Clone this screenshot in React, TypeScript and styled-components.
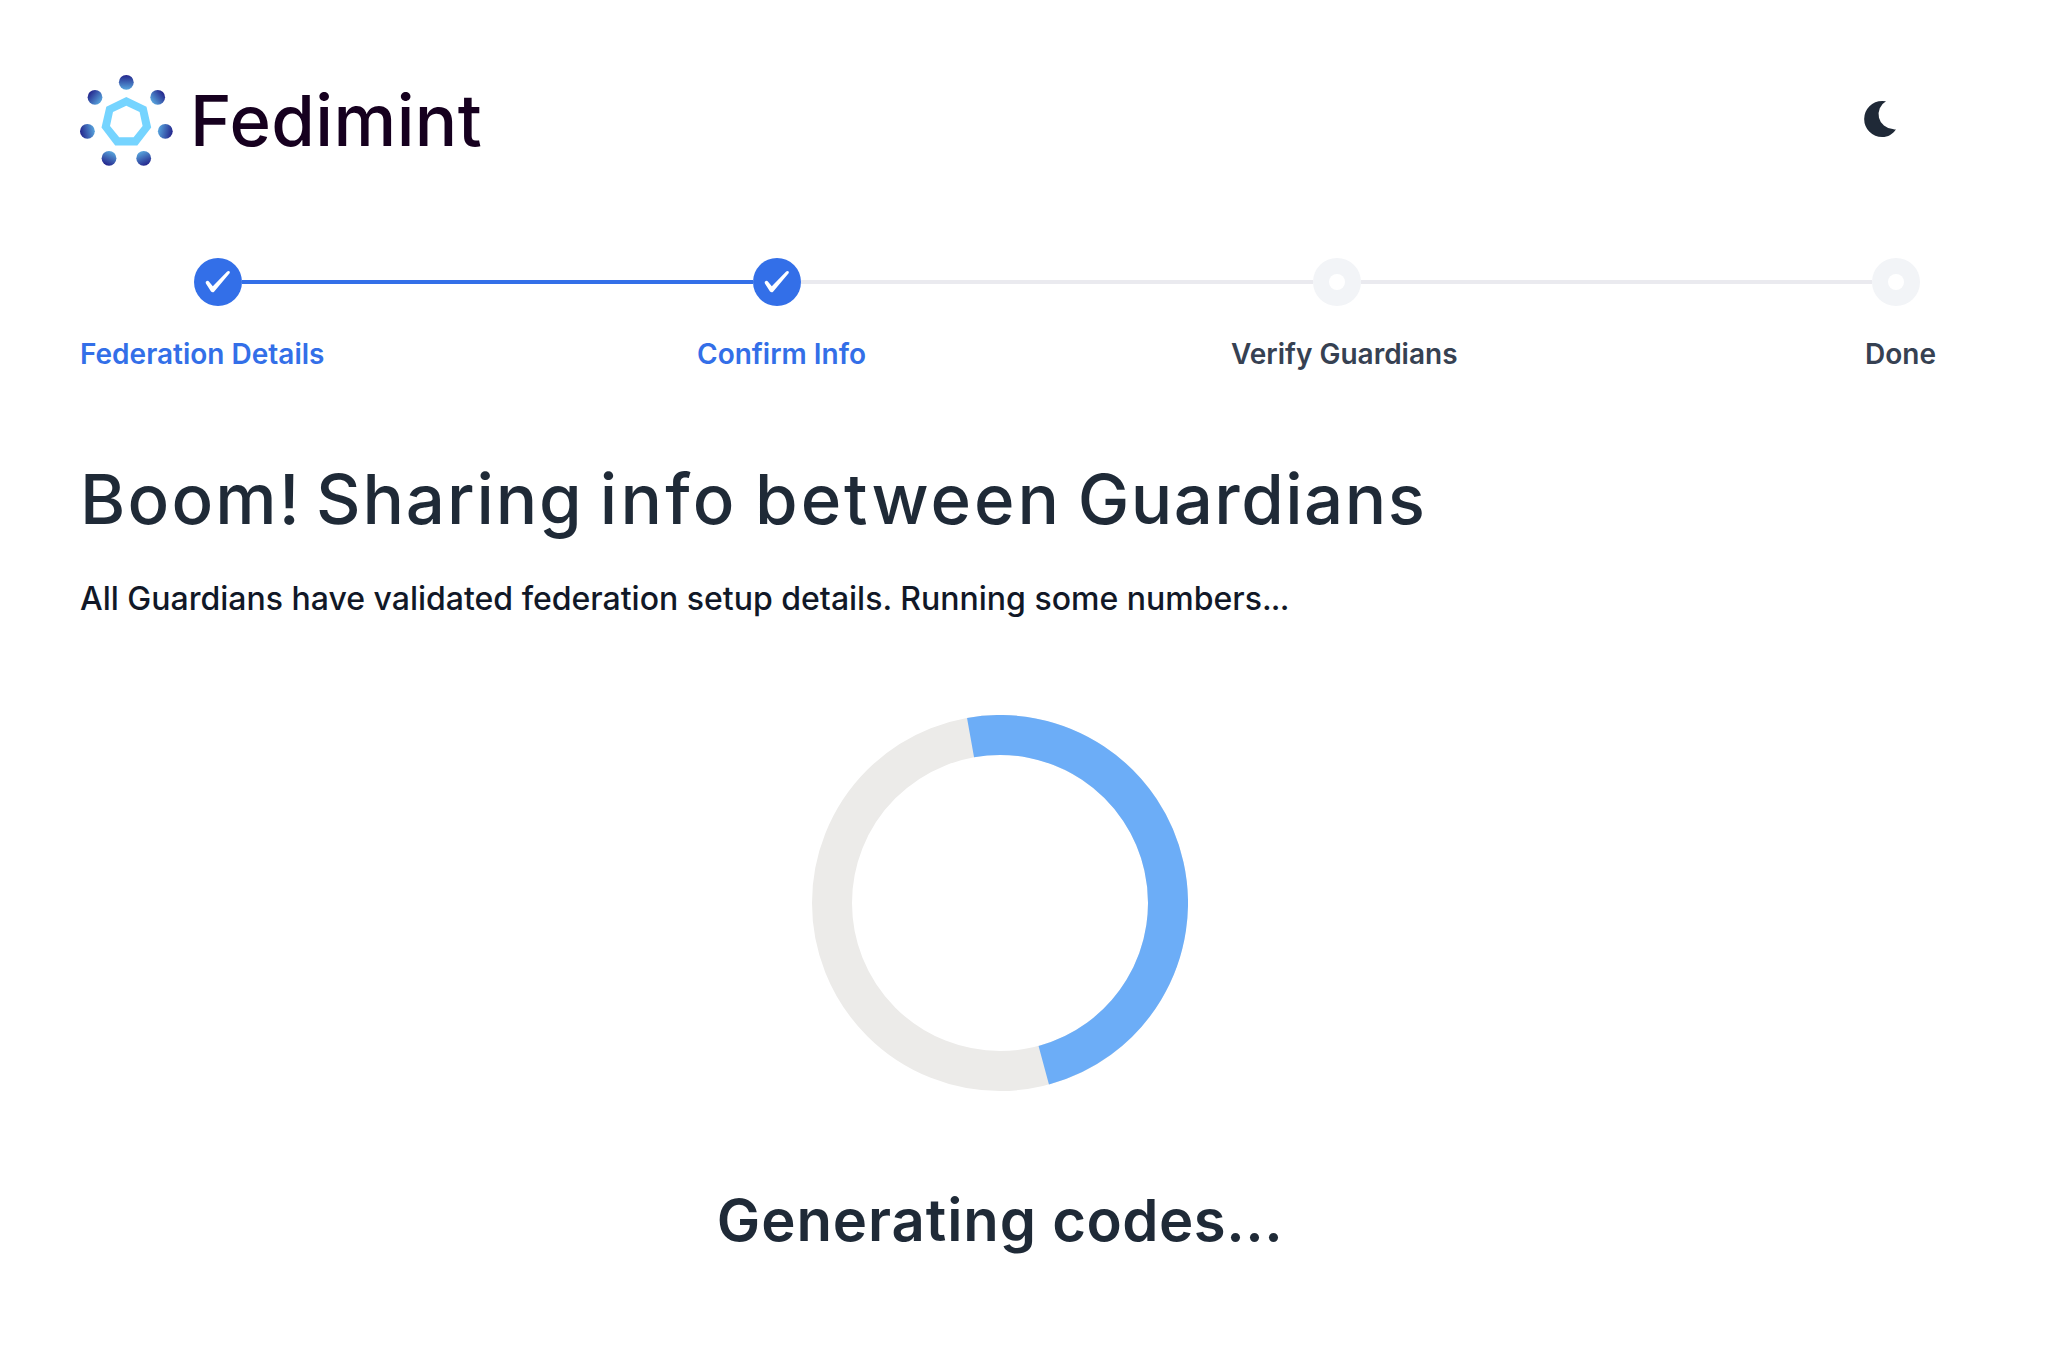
import React from "react";
import styled, { createGlobalStyle } from "styled-components";

const GlobalStyle = createGlobalStyle`
  * { box-sizing: border-box; }
  body {
    margin: 0;
    background: #fff;
    color: #1f2937;
    font-family: Inter, "Liberation Sans", sans-serif;
  }
`;

const Page = styled.div`
  display: flex;
  flex-direction: column;
  min-height: 1346px;
  padding: 73px 138px 0 80px;
`;

const Header = styled.header`
  display: flex;
  align-items: center;
  justify-content: space-between;
  height: 96px;
`;

const Brand = styled.div`
  display: flex;
  align-items: center;
  gap: 17px;
`;

const Wordmark = styled.span`
  color: #16001f;
  font-size: 70.6px;
  font-weight: 500;
  line-height: 96px;
  letter-spacing: 0.4px;
`;

const ThemeButton = styled.button`
  display: flex;
  align-items: center;
  justify-content: center;
  width: 80px;
  height: 80px;
  padding: 0 0 4px;
  border: 0;
  border-radius: 12px;
  background: transparent;
  color: #1f2937;
`;

const Track = styled.div`
  display: flex;
  align-items: center;
  margin-top: 89px;
  padding-left: 114px;
`;

const Indicator = styled.div<{ $done: boolean }>`
  display: flex;
  flex: none;
  align-items: center;
  justify-content: center;
  width: 48px;
  height: 48px;
  border-radius: 50%;
  background: ${(p) => (p.$done ? "#336fe8" : "#f2f4f7")};
`;

const Dot = styled.span`
  width: 16px;
  height: 16px;
  border-radius: 50%;
  background: #fff;
`;

const Connector = styled.div<{ $done: boolean }>`
  flex: 1;
  height: 4px;
  background: ${(p) => (p.$done ? "#336fe8" : "#eaeaef")};
`;

const Labels = styled.div`
  display: grid;
  grid-template-columns: 617px 534px 634px auto;
  justify-content: start;
  margin-top: 27px;
`;

const Label = styled.span<{ $done: boolean }>`
  color: ${(p) => (p.$done ? "#336fe8" : "#364152")};
  font-size: 28px;
  font-weight: 600;
  line-height: 42px;
  white-space: nowrap;
`;

const Heading = styled.h2`
  margin: 79px 0 0;
  color: #1f2a37;
  font-size: 69px;
  font-weight: 500;
  line-height: 90px;
  white-space: nowrap;
`;

const Word = styled.span<{ $tracking: number; $after?: number }>`
  margin-right: ${(p) => p.$after ?? 0}px;
  letter-spacing: ${(p) => p.$tracking}px;
`;

const Description = styled.p`
  margin: 31px 0 0;
  color: #111827;
  font-size: 32px;
  font-weight: 500;
  line-height: 48px;
`;

const Progress = styled.section`
  display: flex;
  flex-direction: column;
  align-items: center;
  margin-top: 91.5px;
`;

const Status = styled.h3`
  margin: 89.5px 0 0;
  color: #1f2a37;
  font-size: 58px;
  font-weight: 600;
  line-height: 80px;
  white-space: nowrap;
`;

const nodes = [
  { x: 46.3, y: 9.3 },
  { x: 77.7, y: 24.3 },
  { x: 85.3, y: 58.3 },
  { x: 63.7, y: 85.3 },
  { x: 29, y: 85.3 },
  { x: 7.4, y: 58.3 },
  { x: 15, y: 24.3 },
];

const Logo = () => {
  const cx = 46.3;
  const cy = 49.5;
  return (
    <svg width="93" height="96" viewBox="0 0 93 96">
      <defs>
        {nodes.map(({ x, y }, i) => {
          const d = Math.hypot(x - cx, y - cy);
          const ux = ((x - cx) / d) * 7.4;
          const uy = ((y - cy) / d) * 7.4;
          return (
            <linearGradient
              key={i}
              id={`node${i}`}
              gradientUnits="userSpaceOnUse"
              x1={x + ux}
              y1={y + uy}
              x2={x - ux}
              y2={y - uy}
            >
              <stop offset="0" stopColor="#24258c" />
              <stop offset="1" stopColor="#58a5dd" />
            </linearGradient>
          );
        })}
      </defs>
      {nodes.map(({ x, y }, i) => (
        <circle key={i} cx={x} cy={y} r="7.4" fill={`url(#node${i})`} />
      ))}
      <path
        fill="#75d4ff"
        fillRule="evenodd"
        d="M46.3 24L66.5 33.8L71.2 54.6L57.3 72.5H35.2L21.5 54.6L26.3 33.8ZM46.3 32.7L33 39L30 53L39.2 64.2H53.6L62.6 53L59.6 39Z"
      />
    </svg>
  );
};

const Moon = () => (
  <svg width="32" height="36" viewBox="0 0 96 108">
    <path
      fill="currentColor"
      d="M66 1A44.5 44.5 0 0 0 86 84Q91 86 96 84.5C87 99 72 108 54.5 108A54 54 0 0 1 54.5 0Q61 0 66 1Z"
    />
  </svg>
);

const Check = () => (
  <svg width="48" height="48" viewBox="0 0 48 48">
    <path
      fill="#fff"
      d="M11.9 25.5Q11 23.6 12.7 22.9Q14.2 22.4 15.1 23.7L18.8 28.3L33.2 13.6Q34.2 12.8 35.3 13.3Q36.4 14 35.6 15.3L20.3 33.4Q18.8 35 17 33.6Z"
    />
  </svg>
);

const Ring = () => {
  const at = (deg: number) => {
    const a = (deg * Math.PI) / 180;
    return `${188 + 168 * Math.sin(a)} ${188 - 168 * Math.cos(a)}`;
  };
  return (
    <svg width="376" height="376" viewBox="0 0 376 376" fill="none" strokeWidth="40">
      <circle cx="188" cy="188" r="168" stroke="#ecebe9" />
      <path d={`M${at(-10.1)}A168 168 0 0 1 ${at(164.9)}`} stroke="#6cadf7" />
    </svg>
  );
};

const steps = [
  { title: "Federation Details", done: true },
  { title: "Confirm Info", done: true },
  { title: "Verify Guardians", done: false },
  { title: "Done", done: false },
];

export default function App() {
  return (
    <Page>
      <GlobalStyle />
      <Header>
        <Brand>
          <Logo />
          <Wordmark>Fedimint</Wordmark>
        </Brand>
        <ThemeButton aria-label="Toggle theme">
          <Moon />
        </ThemeButton>
      </Header>
      <Track>
        {steps.map((step, i) => (
          <React.Fragment key={step.title}>
            {i > 0 && <Connector $done={i === 1} />}
            <Indicator $done={step.done}>{step.done ? <Check /> : <Dot />}</Indicator>
          </React.Fragment>
        ))}
      </Track>
      <Labels>
        {steps.map((step) => (
          <Label key={step.title} $done={step.done}>
            {step.title}
          </Label>
        ))}
      </Labels>
      <Heading>
        <Word $tracking={2.2} $after={-4.4}>Boom!</Word>{" "}
        <Word $tracking={1.9} $after={-2.3}>Sharing</Word>{" "}
        <Word $tracking={3.2} $after={-0.9}>info</Word>{" "}
        <Word $tracking={2.9} $after={-2.5}>between</Word>{" "}
        <Word $tracking={1.45}>Guardians</Word>
      </Heading>
      <Description>
        All Guardians have validated federation setup details. Running some numbers
        <Word $tracking={-0.8}>...</Word>
      </Description>
      <Progress>
        <Ring />
        <Status>
          <Word $tracking={0.95} $after={0.6}>Generating</Word>{" "}
          <Word $tracking={0.5}>codes...</Word>
        </Status>
      </Progress>
    </Page>
  );
}
